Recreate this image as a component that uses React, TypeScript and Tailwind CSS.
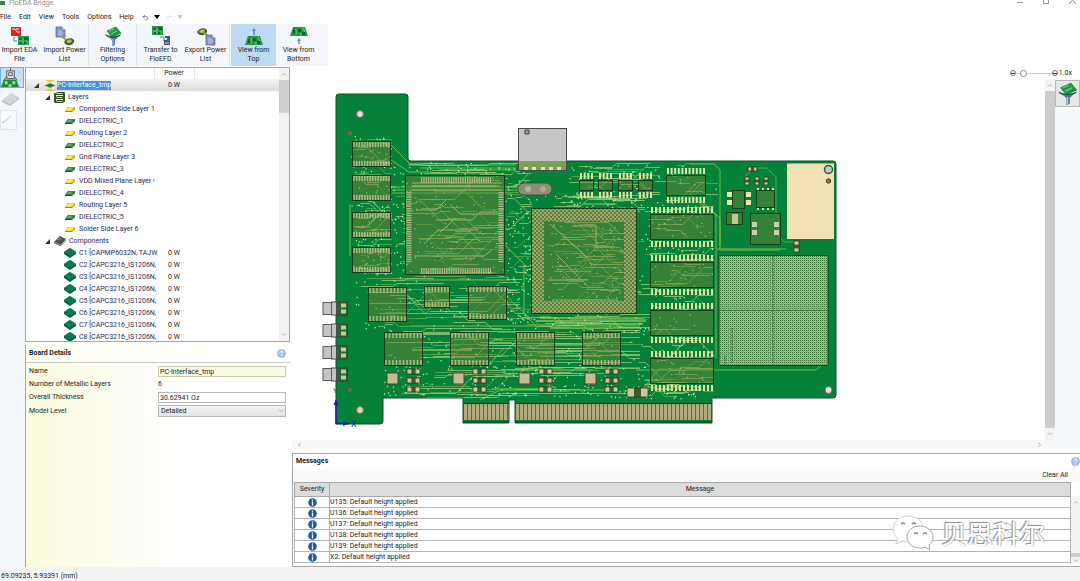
import { useState } from "react"
import type { ReactNode } from "react"
import clsx from "clsx"
import { LuRedo2, LuUndo2 } from "react-icons/lu"

const layers = [
  "Component Side Layer 1",
  "DIELECTRIC_1",
  "Routing Layer 2",
  "DIELECTRIC_2",
  "Gnd Plane Layer 3",
  "DIELECTRIC_3",
  "VDD Mixed Plane Layer ‹",
  "DIELECTRIC_4",
  "Routing Layer 5",
  "DIELECTRIC_5",
  "Solder Side Layer 6",
]

const components = [
  "C1 [CAPMP6032N, TAJW",
  "C2 [CAPC3216_IS1206N,",
  "C3 [CAPC3216_IS1206N,",
  "C4 [CAPC3216_IS1206N,",
  "C5 [CAPC3216_IS1206N,",
  "C6 [CAPC3216_IS1206N,",
  "C7 [CAPC3216_IS1206N,",
  "C8 [CAPC3216_IS1206N,",
]

const messages = ["U135", "U136", "U137", "U138", "U139", "X2"]

/* ---------- icons ---------- */

function MiniBoard({ x, y }: { x: number; y: number }) {
  return (
    <g transform={`translate(${x} ${y})`}>
      <path d="M0 0h11v9H0z" fill="#249a44" />
      <path d="M1 2h3v2H1zM6 1h4v3H6zM2 6h2v2H2zM6 6h3v2H6z" fill="#0c6b2a" />
      <path d="M4 3h2M5 4v4M9 5v3M1 5h3" stroke="#a5e3a4" strokeWidth=".7" />
    </g>
  )
}

function Sheet({ x, y }: { x: number; y: number }) {
  return (
    <g transform={`translate(${x} ${y})`}>
      <path d="M0 0h6l3 3v7H0z" fill="#8397c8" stroke="#4d5f96" strokeWidth=".7" />
      <path d="M6 0v3h3" fill="#dfe6f8" stroke="#4d5f96" strokeWidth=".5" />
      <path d="M2 4h4M2 6h5M2 8h4" stroke="#dbe3f6" strokeWidth=".7" />
    </g>
  )
}

function Coin({ x, y }: { x: number; y: number }) {
  return (
    <g transform={`translate(${x} ${y})`}>
      <path d="M0 4C2 0 8-1 10 2c1 3-3 6-6 5C2 7 1 6 0 4z" fill="#4c5a2a" />
      <path d="M2 4c2-3 5-3 6-1-1 2-3 3-6 1z" fill="#b9c26a" />
    </g>
  )
}

function FunnelIcon({ className }: { className: string }) {
  return (
    <svg viewBox="0 0 20 20" className={className} aria-hidden="true">
      <path d="M4 5l9-4 5 6-9 4z" fill="#1f9a42" stroke="#0c6a2b" strokeWidth=".6" />
      <path d="M6 5l5-2M8 8l6-3" stroke="#7bd485" strokeWidth="1" />
      <path d="M2 8c4 3 12 3 16 0l-6 6v5l-3 1v-6z" fill="#5377a5" />
      <path d="M2 8c4 3 12 3 16 0l-1 2c-4 2-10 2-14 0z" fill="#12583d" />
      <path d="M10 13v6" stroke="#b9cdec" />
    </svg>
  )
}

function ToolIcon({ kind }: { kind: string }) {
  if (kind === "filter") return <FunnelIcon className="size-5" />
  return (
    <svg viewBox="0 0 20 20" className="size-5" aria-hidden="true">
      {kind === "eda" && (
        <>
          <path d="M1 1h10v9H1z" fill="#df2027" />
          <path d="M2 3h3l2 3h3M6 3h3" stroke="#fff" fill="none" />
          <path d="M4 11v4h3" stroke="#777" fill="none" />
          <MiniBoard x={8} y={10} />
        </>
      )}
      {kind === "importPower" && (
        <>
          <Sheet x={1} y={1} />
          <path d="M7 10l4 4" stroke="#8ca52f" strokeWidth="2" />
          <Coin x={9} y={12} />
        </>
      )}
      {kind === "transfer" && (
        <>
          <MiniBoard x={1} y={0} />
          <path d="M9 11h4v4" stroke="#777" fill="none" />
          <path d="M14 10h5v9h-6v-5h3v-2h-2z" fill="#3f5797" />
          <path d="M14 17h4" stroke="#b9c9ee" />
        </>
      )}
      {kind === "exportPower" && (
        <>
          <Coin x={1} y={2} />
          <path d="M7 6l5 4" stroke="#8ca52f" strokeWidth="2" />
          <Sheet x={10} y={9} />
        </>
      )}
      {kind === "top" && (
        <>
          <path d="M4 10h12l3 9H1z" fill="#23943f" />
          <path d="M4 13h3v4H4zM9 12h3v3H9zM13 15h3v3h-3z" fill="#0b642a" />
          <path d="M7 12v6M12 16v3M14 11l2 4" stroke="#a8e5a8" strokeWidth=".7" />
          <path d="M10 9V5" stroke="#5b7fb8" strokeWidth="1.400" />
          <path d="M8 5l2-3 2 3z" fill="#6587bf" />
        </>
      )}
      {kind === "bottom" && (
        <>
          <path d="M4 1h12l3 9H1z" fill="#23943f" />
          <path d="M4 4h3v4H4zM9 3h3v3H9zM13 6h3v3h-3z" fill="#0b642a" />
          <path d="M7 3v6M12 7v3M14 2l2 4" stroke="#a8e5a8" strokeWidth=".7" />
          <path d="M10 18v-4" stroke="#5b7fb8" strokeWidth="1.400" />
          <path d="M8 15l2-3 2 3z" fill="#6587bf" />
        </>
      )}
    </svg>
  )
}

function TreeIcon({ kind }: { kind: string }) {
  if (kind === "board") {
    return (
      <svg viewBox="0 0 14 11" className="h-[11px] w-3.5 shrink-0" aria-hidden="true">
        <path d="M2 0h10L9 2H5zM2 11h10L9 9H5z" fill="#f3c63d" />
        <path d="M0 5.500l4-1 3-2 3 2 4 1-4 1-3 2-3-2z" fill="#d9b325" />
        <path d="M2 5.500l5-2 5 2-5 2z" fill="#12803c" />
      </svg>
    )
  }
  if (kind === "layers") {
    return (
      <svg viewBox="0 0 11 11" className="size-[11px] shrink-0" aria-hidden="true">
        <path d="M3 0h8L9 3H0zM3 4h8L9 7H0zM3 8h8l-2 3H0z" fill="#2c4f1e" />
        <path d="M0 1h2v9H0zM9 1h2v9H9z" fill="#33571f" />
        <path d="M3 1h6L8 2H2zM3 5h6L8 6H2zM3 9h6l-1 1H2z" fill="#ead72e" />
      </svg>
    )
  }
  if (kind === "parts") {
    return (
      <svg viewBox="0 0 12 11" className="h-[11px] w-3 shrink-0" aria-hidden="true">
        <path d="M0 6l6-6 6 3-5 6z" fill="#4a5552" />
        <path d="M0 6l7 3v1L0 7zM8 9l4-5" stroke="#8b9391" strokeWidth="1" />
        <path d="M4 4l3-2" stroke="#9aa5a2" />
      </svg>
    )
  }
  if (kind === "part") {
    return (
      <svg viewBox="0 0 12 10" className="h-2.5 w-3 shrink-0" aria-hidden="true">
        <path d="M0 4l6-4 6 4v2l-6 4-6-4z" fill="#036149" />
        <path d="M0 4l6-4 6 4-6 4z" fill="#0b7a58" />
      </svg>
    )
  }
  const metal = kind === "metal"
  return (
    <svg viewBox="0 0 12 10" className="h-2.5 w-3 shrink-0" aria-hidden="true">
      <path d="M1 7l3-4h7v2L8 8H1z" fill={metal ? "#a68e08" : "#1d4f24"} />
      <path d="M1 7l3-4h7L8 7z" fill={metal ? "#f2dd2b" : "#3b9348"} />
      <path d="M4 6l1-2h3z" fill={metal ? "#fff7a6" : "#8fcb95"} />
    </svg>
  )
}

function HelpBall() {
  return (
    <svg viewBox="0 0 9 9" className="size-[9px]" aria-hidden="true">
      <circle cx="4.500" cy="4.500" r="4" fill="#a9c3ea" stroke="#7f9fd2" strokeWidth=".6" />
      <path d="M3 3.500c0-2 3-2 3 0 0 1-1.500 1-1.500 2M4.500 6.500v1" stroke="#fff" fill="none" />
    </svg>
  )
}

function InfoBall() {
  return (
    <svg viewBox="0 0 9 9" className="mx-auto size-[9px]" role="img" aria-label="Info">
      <circle cx="4.500" cy="4.500" r="4.300" fill="#1d57a8" />
      <path d="M4.500 1.500v1.300M4.500 3.600v4" stroke="#fff" strokeWidth="1.300" />
    </svg>
  )
}

function Arrow({ up = false }: { up?: boolean }) {
  return (
    <svg viewBox="0 0 6 4" className={clsx("h-1 w-1.5", up && "rotate-180")} aria-hidden="true">
      <path d="M1 .5l2 2 2-2" fill="none" stroke="#b0b0b0" />
    </svg>
  )
}

/* ---------- board drawing ---------- */

// small LCG so the routing is the same on every render
function makeRandom(seed: number) {
  let s = seed
  return () => {
    s = (s * 1664525 + 1013904223) % 4294967296
    return s / 4294967296
  }
}

type Area = [x1: number, y1: number, x2: number, y2: number, traces: number, vias: number]

const routed: Area[] = [
  [352, 136, 392, 275, 36, 150],
  [406, 176, 504, 274, 34, 70],
  [392, 164, 408, 272, 12, 40],
  [408, 163, 520, 175, 12, 30],
  [505, 172, 532, 320, 34, 90],
  [568, 164, 660, 205, 16, 45],
  [534, 195, 645, 210, 12, 30],
  [544, 220, 626, 302, 42, 90],
  [638, 204, 714, 390, 46, 170],
  [655, 164, 718, 205, 6, 12],
  [355, 276, 520, 332, 26, 55],
  [384, 330, 640, 368, 34, 80],
  [384, 366, 640, 398, 22, 150],
  [500, 314, 650, 332, 14, 30],
  [640, 384, 700, 400, 10, 30],
]

function buildRouting() {
  const rnd = makeRandom(77)
  const light: string[] = []
  const dark: string[] = []
  const vias: string[] = []
  routed.forEach(([x1, y1, x2, y2, traces, dots]) => {
    const w = x2 - x1
    for (let i = 0; i < traces; i++) {
      const x = x1 + rnd() * w * 0.7
      const y = Math.round(y1 + rnd() * (y2 - y1)) + 0.5
      const run = 3 + rnd() * w * 0.3
      let jog = Math.round((rnd() - 0.5) * 44)
      if (y + jog < y1 || y + jog > y2) jog = Math.round(jog / 6)
      if (x + run + Math.abs(jog) > x2) jog = 0
      const end = Math.min(x + run + Math.abs(jog) + rnd() * w * 0.4, x2)
      const d = `M${x.toFixed(1)} ${y}h${run.toFixed(1)}l${Math.abs(jog)} ${jog}H${end.toFixed(1)}`
      ;(rnd() > 0.45 ? light : dark).push(d)
    }
    for (let i = 0; i < dots; i++) {
      const x = (x1 + rnd() * w).toFixed(1)
      const y = (y1 + rnd() * (y2 - y1)).toFixed(1)
      vias.push(`M${x} ${y}h.01`)
    }
  })
  return { light: light.join(""), dark: dark.join(""), vias: vias.join("") }
}

const routing = buildRouting()

const outline =
  "M339 94H405q3 0 3 3V158q0 3 3 3H833q3 0 3 3V395q0 3-3 3H712V423H515V400H509V423H463V398H383V421q0 3-3 3H336V97q0-3 3-3z"

type Box = { x: number; y: number; w: number; h: number }

function Pins({ x, y, n, step, h = 6, w = 2, color = "#dfe3a0" }: { x: number; y: number; n: number; step: number; h?: number; w?: number; color?: string }) {
  const d = Array.from({ length: n }, (_, i) => `M${(x + i * step).toFixed(1)} ${y}v${h}`).join("")
  return <path d={d} stroke={color} strokeWidth={w} />
}

function Body({ x, y, w, h }: Box) {
  return <rect x={x + 0.5} y={y + 0.5} width={w - 1} height={h - 1} fill="#6f8035" fillOpacity=".45" stroke="#133d1b" />
}

// package whose pads sit under its outline
function InnerChip({ x, y, w, h, n }: Box & { n: number }) {
  const step = (w - 4) / (n - 1)
  return (
    <g>
      <Body x={x} y={y} w={w} h={h} />
      <Pins x={x + 2} y={y + 1} n={n} step={step} h={5} w={1.5} color="#b5b882" />
      <Pins x={x + 2} y={y + h - 6} n={n} step={step} h={5} w={1.5} color="#b5b882" />
    </g>
  )
}

// package with pads above and below its outline
function OuterChip({ x, y, w, h, n }: Box & { n: number }) {
  const step = (w - 4) / (n - 1)
  return (
    <g>
      <Pins x={x + 2} y={y - 7} n={n} step={step} />
      <Pins x={x + 2} y={y + h + 1} n={n} step={step} />
      <Body x={x} y={y} w={w} h={h} />
    </g>
  )
}

function Passive({ x, y, w, h }: Box) {
  const wide = w > h
  return (
    <g>
      <rect x={x} y={y} width={w} height={h} fill="#cfc79a" />
      {wide ? (
        <rect x={x + w / 3} y={y} width={w / 3} height={h} fill="#34602e" />
      ) : (
        <rect x={x} y={y + h / 3} width={w} height={h / 3} fill="#34602e" />
      )}
      <rect x={x} y={y} width={w} height={h} fill="none" stroke="#3a2f22" strokeWidth=".8" />
    </g>
  )
}

function Board() {
  return (
    <svg viewBox="320 90 520 342" className="block h-[342px] w-[520px] shrink-0" role="img" aria-label="Board view">
      <defs>
        <clipPath id="outline">
          <path d={outline} />
        </clipPath>
        <pattern id="balls" width="4" height="4" patternUnits="userSpaceOnUse">
          <rect width="4" height="4" fill="#3f7a35" />
          <circle cx="1" cy="1" r="1.200" fill="#cdd0a4" />
          <circle cx="3" cy="3" r="1.200" fill="#cdd0a4" />
        </pattern>
        <pattern id="proto" width="4" height="4" patternUnits="userSpaceOnUse">
          <rect width="4" height="4" fill="#a9b985" />
          <path d="M0 0h1v1H0zM2 2h1v1H2zM0 2h1v1H0zM2 0h1v1H2z" fill="#3f7a3c" />
          <path d="M1 1h1v1H1zM3 3h1v1H3z" fill="#7fa35d" />
        </pattern>
        <pattern id="fingers" x="3" width="4" height="20" patternUnits="userSpaceOnUse">
          <rect width="4" height="20" fill="#b3ab80" />
          <rect width="1" height="20" fill="#5b6a3e" />
        </pattern>
      </defs>

      <g clipPath="url(#outline)">
        <rect x="330" y="90" width="510" height="340" fill="#05813a" />
        <path
          d="M408 165h108M420 168h96M439 170h77M392 187h130M392 190h130M392 193h120M350 204v52M391 145l18 18M391 160l18 12h22M400 280h110M410 326h230M690 164h24l6 6v76M690 195l26 20v34h70M700 200l20 18v32h60M623 391h18l18-22h54M636 370h180l6-5M500 240l24 24v50l14 14M506 296l26 24M480 400l20-10h110M716 250v108M486 368l18-20M512 352l18 22"
          fill="none"
          stroke="#6cbd50"
        />
        <path
          d="M540 318h104M536 321h110M545 324h98M550 328h90M412 183h90M412 186h88M412 350h60M540 345h60M540 356h60"
          fill="none"
          stroke="#8fc255"
          strokeWidth="1.500"
        />
        <path d={routing.dark} fill="none" stroke="#4aa64a" />
        <path d={routing.light} fill="none" stroke="#96c774" strokeWidth=".8" />
        <path d={routing.vias} stroke="#b9efa8" strokeWidth="1.500" strokeLinecap="round" />

        <rect x="463" y="403" width="46" height="17" fill="url(#fingers)" />
        <rect x="515" y="403" width="197" height="17" fill="url(#fingers)" />
        <path d="M463 403.500h46M515 403.500h197M463 422h46M515 422h197" stroke="#12401f" />
      </g>
      <path d={outline} fill="none" stroke="#0c5126" />

      {[141, 175, 212, 247].map((y) => (
        <InnerChip key={y} x={352} y={y} w={39} h={26} n={14} />
      ))}

      {/* quad flat pack */}
      <Body x={405} y={175} w={100} h={100} />
      <path d="M421 180h70M421 271h70" stroke="#b3b884" strokeWidth="6" strokeDasharray="1.300 1" />
      <path d="M409 192v70M501 192v70" stroke="#b3b884" strokeWidth="5" strokeDasharray="1.300 1" />
      <path
        d="M412 186h84M412 190h90M436 220h36l8-8h18M440 232l16-14M424 244l14-14h40M414 256h70l8-6M450 204l10 10h40M416 210h20l10-10"
        fill="none"
        stroke="#9fb26c"
      />

      {/* ball grid array */}
      <path d="M531 208h106v106H531zM544 221v80h80v-80z" fill="url(#balls)" fillRule="evenodd" />
      <Body x={531} y={208} w={106} h={106} />
      <path d="M550 224l38 34M556 254l20 20M572 226h24v20M548 280h40M600 290h20M552 300h66" stroke="#9fb26c" fill="none" />

      <rect x="518.500" y="129" width="48" height="42" fill="#c6c6c6" />
      <rect x="518.500" y="161" width="48" height="10" fill="#7da056" />
      <path d="M524 169h4M532 169h4M541 169h4M549 169h4M557 169h4" stroke="#e0e0cc" strokeWidth="4" />
      <rect x="518.500" y="128.500" width="48" height="42" fill="none" stroke="#4a4a4a" />
      <path d="M525 130h4v4h-4z" fill="#999" stroke="#444" />
      <rect x="518" y="183" width="34" height="12" rx="6" fill="#8b8f78" stroke="#44503a" />
      <circle cx="528" cy="189" r="3" fill="#a9b7a4" />
      <circle cx="543" cy="189" r="3" fill="#b5a78e" />

      {[579, 598, 618, 638].map((x) => (
        <OuterChip key={x} x={x} y={180} w={15} h={11} n={4} />
      ))}
      <OuterChip x={666} y={175} w={40} h={21} n={11} />
      {[214, 262, 310, 358].map((y) => (
        <OuterChip key={y} x={650} y={y} w={64} h={26} n={16} />
      ))}

      <InnerChip x={368} y={287} w={39} h={35} n={11} />
      <InnerChip x={424} y={286} w={26} h={22} n={8} />
      <InnerChip x={468} y={286} w={39} h={34} n={11} />
      {[384, 450, 516, 582].map((x) => (
        <g key={x}>
          <InnerChip x={x} y={332} w={39} h={34} n={11} />
          <rect x={x + 3} y={373} width="11" height="11" fill="#c8bc92" stroke="#4a4a2c" />
          <Passive x={x + 23} y={369} w={13} h={5} />
          <Passive x={x + 23} y={378} w={13} h={5} />
          <Passive x={x + 23} y={387} w={13} h={5} />
        </g>
      ))}
      <Passive x={627} y={388} w={21} h={9} />

      {/* supply corner */}
      <rect x="787" y="163.500" width="47" height="75.500" fill="#f4e1b4" />
      <path d="M745 177l8-9h14l9 9v38M774 230l10 12h12" stroke="#68b861" fill="none" strokeWidth=".8" />
      <Passive x={748} y={167} w={9} h={4} />
      <Passive x={745} y={177} w={4} h={8} />
      <Passive x={755} y={177} w={4} h={8} />
      <Passive x={764} y={177} w={4} h={8} />
      <path d="M727 192h5v5h-5zM727 200h5v5h-5zM746 192h5v5h-5zM746 200h5v5h-5z" fill="#eee6a8" />
      <Body x={732} y={190} w={13} h={19} />
      <Pins x={758} y={188} n={4} step={5} h={3} />
      <Pins x={758} y={207} n={4} step={5} h={3} />
      <Body x={756} y={190} w={19} h={18} />
      <Body x={726} y={212} w={17} h={13} />
      <path d="M732 214h6v10h-6z" fill="#c1c79b" />
      <Body x={750} y={213} w={31} h={32} />
      <path d="M752 222h5v5h-5zM752 230h5v5h-5zM774 222h5v5h-5zM774 230h5v5h-5z" fill="#c7d0ae" />
      <Passive x={794} y={241} w={5} h={11} />

      {/* prototyping field */}
      <rect x="719" y="255.500" width="109" height="110" rx="1" fill="url(#proto)" stroke="#19401f" />
      <path d="M773 256v109M719.500 310.500h108" stroke="#2f6d34" strokeDasharray="2 1" />
      <path d="M732 328v36M725 356v8" stroke="#2f6d34" strokeDasharray="2 1" />

      {/* front panel leds */}
      {[302, 324, 346, 368].map((y) => (
        <g key={y}>
          <rect x="336.500" y={y} width="11" height="13" fill="#2c6331" stroke="#3f3f34" />
          <path d={`M341 ${y + 1.5}h5v4h-5zM341 ${y + 7.5}h5v4h-5z`} fill="#b8d19b" />
          <rect x="331.500" y={y} width="5" height="13" fill="#c5c5c5" stroke="#4b4b4b" />
          <rect x="323" y={y + 0.5} width="8.500" height="12" fill="#c5c5c5" stroke="#5b5b5b" />
        </g>
      ))}

      <g stroke="#6c6a58">
        <circle cx="360" cy="114" r="3.500" fill="#ead9d4" />
        <circle cx="360" cy="410" r="3.500" fill="#ded6c4" />
        <circle cx="828.500" cy="390" r="3.500" fill="#ead9d4" />
        <circle cx="350" cy="133.500" r="1.500" fill="#8b5a3c" />
        <circle cx="350" cy="390" r="1.500" fill="#8b5a3c" />
        <circle cx="828.500" cy="181" r="2.200" fill="#8a7a28" stroke="#4b4216" />
        <circle cx="828.500" cy="169.500" r="4" fill="#b9d3c2" stroke="#205e3c" strokeWidth="1.500" />
      </g>

      <path d="M336 401v22.500h13" stroke="#15259b" strokeWidth="1.500" fill="none" />
      <path d="M333.500 405l2.500-6 2.500 6zM343 421l6 2.500-6 2.500z" fill="#15259b" />
      <text x="333" y="393" className="text-[7px]" fill="#1a4f3a">Y</text>
      <text x="351" y="427" className="text-[9px]" fill="#15259b">X</text>
    </svg>
  )
}

/* ---------- shell ---------- */

function ToolButton({ icon, label, active = false }: { icon: string; label: ReactNode; active?: boolean }) {
  return (
    <button
      type="button"
      className={clsx("flex w-[45px] shrink-0 flex-col items-center pt-0.5 whitespace-nowrap", active && "bg-[#bddaf3]")}
    >
      <ToolIcon kind={icon} />
      <span className="leading-[9px]">{label}</span>
    </button>
  )
}

function Divider() {
  return <span className="mx-px w-px shrink-0 bg-[#dde3ea]" />
}

function TopBar() {
  return (
    <header className="shrink-0">
      <div className="flex h-[10px] items-start justify-between text-[#8d8d8d]">
        <div className="flex h-[7px] items-center gap-1">
          <svg viewBox="0 0 5 5" className="size-[5px]" aria-hidden="true">
            <path d="M0 0h5v4H0z" fill="#2a8a4b" />
          </svg>
          <span className="leading-[7px]">FloEDA Bridge</span>
        </div>
        <div className="flex h-1 gap-5 pr-1">
          <button type="button" aria-label="Minimize" className="h-[3px] w-[6px] border-b border-[#9a9a9a]" />
          <button type="button" aria-label="Restore" className="h-1 w-[6px] border-x border-b border-[#9a9a9a]" />
          <button type="button" aria-label="Close" className="h-1 w-[7px]">
            <svg viewBox="0 0 7 4" className="h-1 w-[7px]" aria-hidden="true">
              <path d="M0 4l3.500-4L7 4" fill="none" stroke="#8a8a8a" />
            </svg>
          </button>
        </div>
      </div>
      <nav className="flex h-[14px] items-center gap-2">
        <button type="button">File</button>
        <button type="button">Edit</button>
        <button type="button">View</button>
        <button type="button">Tools</button>
        <button type="button">Options</button>
        <button type="button">Help</button>
        <span className="flex items-center gap-[5px]">
          <button type="button" aria-label="Undo"><LuUndo2 className="size-[7px] text-[#243f66]" /></button>
          <button type="button" aria-label="Undo history" className="border-x-3 border-t-4 border-x-transparent border-t-black" />
          <button type="button" aria-label="Redo"><LuRedo2 className="size-[7px] text-[#cfcfcf]" /></button>
          <button type="button" aria-label="Redo history" className="border-x-3 border-t-4 border-x-transparent border-t-[#c9c9c9]" />
        </span>
      </nav>
      <div className="flex">
        <div className="flex h-[42px] bg-[#f3f7fc] pr-[7px]">
          <div className="-ml-[3px] flex">
            <ToolButton icon="eda" label={<>Import EDA<br />File</>} />
            <ToolButton icon="importPower" label={<>Import Power<br />List</>} />
            <Divider />
            <ToolButton icon="filter" label={<>Filtering<br />Options</>} />
            <Divider />
            <ToolButton icon="transfer" label={<>Transfer to<br />FloEFD</>} />
            <ToolButton icon="exportPower" label={<>Export Power<br />List</>} />
            <Divider />
            <ToolButton icon="top" label={<>View from<br />Top</>} active />
            <ToolButton icon="bottom" label={<>View from<br />Bottom</>} />
          </div>
        </div>
      </div>
    </header>
  )
}

function SideRail() {
  return (
    <aside className="flex w-[25px] shrink-0 flex-col bg-[#f3f7fc]">
      <button type="button" aria-label="Board view" className="flex h-[21px] w-6 items-center border border-[#6eaee0] bg-[#c4e0f6]">
        <svg viewBox="0 0 20 20" className="size-[19px]" aria-hidden="true">
          <path d="M3 12h13l3 8H0z" fill="#1e8a3c" />
          <path d="M4 14h3v3H4zM12 14h3v3h-3zM8 17h3v3H8z" fill="#a9d7a5" />
          <path d="M6 3h8v8H6z" fill="#e6e9ed" stroke="#555" />
          <path d="M10 0v3M3 13l3-4M17 13l-3-4M8 5h4v3H8z" stroke="#555" fill="none" />
        </svg>
      </button>
      <button type="button" aria-label="Component view" className="flex h-[22px] items-center">
        <svg viewBox="0 0 20 16" className="h-4 w-5" aria-hidden="true">
          <path d="M2 9l9-7 8 4-9 7z" fill="#d3d5d7" />
          <path d="M2 9l8 4v2l-8-4zM10 13l9-7v2l-9 7z" fill="#bbbec1" />
        </svg>
      </button>
      <button type="button" aria-label="Edit" className="h-5 w-[17px] border border-[#e1e4e8] bg-[#f8f9fb]">
        <svg viewBox="0 0 16 16" className="size-4" aria-hidden="true">
          <path d="M2 11l8-7M2 11v-2" stroke="#c4c4c4" fill="none" />
        </svg>
      </button>
    </aside>
  )
}

function TreeRow({ depth, icon, label, power, open }: { depth: number; icon: string; label: string; power?: string; open?: boolean }) {
  const root = depth === 0
  return (
    <tr className={clsx("h-3", root && "bg-linear-to-b from-[#f4f4f4] to-[#dcdcdc]")}>
      <td className="p-0">
        <div className={clsx("flex h-3 items-center", root && "pl-2", depth === 1 && "pl-[19px]", depth === 2 && "pl-[38px]")}>
          {open && (
            <svg viewBox="0 0 5 5" className="mr-1 size-[5px] shrink-0" aria-hidden="true">
              <path d="M5 0v5H0z" fill="#333" />
            </svg>
          )}
          <TreeIcon kind={icon} />
          <span className={clsx("whitespace-nowrap", root ? "bg-[#4a90d9] text-white" : "ml-[3px] text-[#2a2a52]")}>
            {label}
          </span>
        </div>
      </td>
      <td className="p-0 text-center">{power}</td>
      <td className="p-0" />
    </tr>
  )
}

function BoardTree() {
  return (
    <section className="flex h-[275px] shrink-0 border border-[#a3a7ad] bg-white">
      <div className="min-w-0 flex-1 overflow-hidden">
        <table className="w-full table-fixed border-collapse">
          <colgroup>
            <col className="w-[128px]" />
            <col className="w-10" />
            <col />
          </colgroup>
          <thead>
            <tr className="h-[11px]">
              <th className="border-r border-[#e3e3e3] p-0" aria-label="Item" />
              <th className="border-r border-[#e3e3e3] p-0 font-normal">Power</th>
              <th className="p-0" />
            </tr>
          </thead>
          <tbody>
            <TreeRow depth={0} icon="board" label="PC-Interface_tmp" power="0 W" open />
            <TreeRow depth={1} icon="layers" label="Layers" open />
            {layers.map((name, i) => (
              <TreeRow key={name} depth={2} icon={i % 2 ? "dielectric" : "metal"} label={name} />
            ))}
            <TreeRow depth={1} icon="parts" label="Components" open />
            {components.map((name) => (
              <TreeRow key={name} depth={2} icon="part" label={name} power="0 W" />
            ))}
          </tbody>
        </table>
      </div>
      <div className="flex w-[10px] shrink-0 flex-col items-center justify-between bg-[#f2f2f2] py-1">
        <div className="flex w-full flex-col items-center gap-1">
          <Arrow up />
          <div className="h-[33px] w-full bg-[#cdcdcd]" />
        </div>
        <Arrow />
      </div>
    </section>
  )
}

function BoardDetails() {
  const [name, setName] = useState("PC-Interface_tmp")
  const [thickness, setThickness] = useState("30.62941 Oz")
  return (
    <section className="mt-[3px] flex-1 border-l border-[#a3a7ad] bg-linear-to-r from-[#fcfbdd] to-white to-60%">
      <div className="flex h-[18px] items-center justify-between border-b border-[#c9c9c9] bg-linear-to-r from-[#fffff0] to-white pr-1 pl-[3px]">
        <h2 className="font-bold">Board Details</h2>
        <button type="button" aria-label="Help on board details"><HelpBall /></button>
      </div>
      <div className="grid grid-cols-[129px_1fr] items-center gap-y-[2px] pt-[3px] pr-1 pl-[3px]">
        <label htmlFor="name">Name</label>
        <input
          id="name"
          value={name}
          onChange={(e) => setName(e.target.value)}
          className="h-[11px] w-full min-w-0 border border-[#c9c9b0] bg-[#fafbe3] px-px"
        />
        <span>Number of Metallic Layers</span>
        <span className="h-[11px] leading-[11px]">6</span>
        <label htmlFor="thickness">Overall Thickness</label>
        <input
          id="thickness"
          value={thickness}
          onChange={(e) => setThickness(e.target.value)}
          className="h-[11px] w-full min-w-0 border border-[#b8b8b8] bg-white px-px"
        />
        <label htmlFor="level">Model Level</label>
        <div className="relative flex items-center">
          <select id="level" defaultValue="Detailed" className="h-3 w-full appearance-none border border-[#b8b8b8] bg-linear-to-b from-[#f2f2f2] to-[#e4e4e4] px-0.5">
            <option>Detailed</option>
            <option>Compact</option>
          </select>
          <span className="pointer-events-none absolute right-0.5"><Arrow /></span>
        </div>
      </div>
    </section>
  )
}

function Viewport() {
  const [zoom, setZoom] = useState(15)
  return (
    <main className="flex min-h-0 flex-1 flex-col bg-white">
      <div className="flex h-3 shrink-0 items-center justify-end pr-2">
        <button type="button" aria-label="Zoom out" className="flex size-1.5 items-center rounded-full border border-[#777]">
          <span className="h-px w-full bg-[#555]" />
        </button>
        <input
          type="range"
          aria-label="Zoom"
          value={zoom}
          onChange={(e) => setZoom(Number(e.target.value))}
          className="h-2 w-9 appearance-none bg-linear-to-b from-transparent from-[45%] via-[#777] via-[50%] to-transparent to-[60%] [&::-webkit-slider-thumb]:size-[7px] [&::-webkit-slider-thumb]:appearance-none [&::-webkit-slider-thumb]:rounded-full [&::-webkit-slider-thumb]:border [&::-webkit-slider-thumb]:border-[#888] [&::-webkit-slider-thumb]:bg-white"
        />
        <button type="button" aria-label="Zoom in" className="flex size-1.5 items-center justify-center rounded-full border border-[#777]">
          <span className="h-px w-full bg-[#333]" />
        </button>
        <span className="ml-px">1.0x</span>
      </div>
      <div className="flex min-h-0 flex-1">
        <div className="flex min-w-0 flex-1 flex-col">
          <div className="flex min-h-0 flex-1">
            <div className="min-w-0 flex-1 overflow-hidden pt-[11px] pl-7">
              <Board />
            </div>
            <div className="flex w-[10px] shrink-0 flex-col items-center gap-1 bg-[#f4f4f4] py-1">
              <Arrow up />
              <div className="w-full flex-1 bg-[#cdcdcd]" />
              <Arrow />
            </div>
          </div>
          <div className="flex h-[9px] shrink-0 items-center justify-between bg-[#f8f8f8] pr-3 pl-1">
            <span className="rotate-90"><Arrow /></span>
            <span className="-rotate-90"><Arrow /></span>
          </div>
        </div>
        <div className="w-[25px] shrink-0 bg-[#f5f8fc]">
          <button type="button" aria-label="Filter view" className="mt-px flex h-[27px] w-full items-center justify-center border border-[#b9b9b9] bg-[#e7e7e7]">
            <FunnelIcon className="size-[23px]" />
          </button>
        </div>
      </div>
    </main>
  )
}

function Messages() {
  return (
    <section className="relative h-[114px] shrink-0 border-y border-l border-[#a3a7ad] bg-white">
      <div className="flex h-[15px] items-center justify-between pl-[3px]">
        <h2 className="font-bold">Messages</h2>
        <button type="button" aria-label="Help on messages"><HelpBall /></button>
      </div>
      <div className="flex h-[13px] items-center justify-end bg-[#fafafa] pr-3">
        <button type="button">Clear All</button>
      </div>
      <div className="flex pl-px">
        <table className="min-w-0 flex-1 table-fixed border-collapse">
          <thead>
            <tr className="h-[14px] bg-[#dcdcdc]">
              <th className="w-[35px] border border-[#a9a9a9] p-0 font-normal">Severity</th>
              <th className="border border-[#a9a9a9] p-0 font-normal">Message</th>
            </tr>
          </thead>
          <tbody>
            {messages.map((part) => (
              <tr key={part} className="h-[11px]">
                <td className="border border-[#b3b3b3] p-0"><InfoBall /></td>
                <td className="border border-[#b3b3b3] p-0">{part}: Default height applied</td>
              </tr>
            ))}
          </tbody>
        </table>
        <div className="mt-[14px] flex w-[9px] shrink-0 flex-col items-center justify-between bg-[#f4f4f4] pt-1">
          <Arrow up />
          <div className="flex w-full flex-col items-center gap-0.5">
            <div className="h-1 w-full bg-[#cdcdcd]" />
            <Arrow />
          </div>
        </div>
      </div>
      <div className="pointer-events-none absolute right-[35px] bottom-[14px] flex items-center gap-1.5">
        <svg viewBox="0 0 44 38" className="h-[38px] w-11" aria-hidden="true">
          <path d="M17 2C8 2 2 8 2 15c0 4 2 7 5 10l-2 5 6-3c12 3 21-4 21-12S26 2 17 2z" fill="#fff" stroke="#d0d0d0" />
          <path d="M29 12c-8 0-13 5-13 11s5 11 13 11c2 0 4 0 5-1l5 3-1-5c3-2 4-5 4-8 0-6-6-11-13-11z" fill="#fff" stroke="#a5a5a5" />
          <path d="M10 10q2-2 4 0M21 10q2-2 4 0M23 20q2-2 4 0M32 20q2-2 4 0" fill="none" stroke="#888" strokeWidth="1.500" />
        </svg>
        <span className="font-['Noto_Sans_CJK_SC',sans-serif] text-[26px] leading-[36px] text-white [text-shadow:-1px_-1px_1px_#888,1px_0_1px_#aaa]">
          贝思科尔
        </span>
      </div>
    </section>
  )
}

export default function App() {
  return (
    <div className="flex h-screen flex-col overflow-hidden bg-white font-[Roboto,'Open_Sans',sans-serif] text-[7px] leading-[9px] text-[#222]">
      <TopBar />
      <div className="flex min-h-0 flex-1 pt-px">
        <SideRail />
        <div className="flex w-[265px] shrink-0 flex-col">
          <BoardTree />
          <BoardDetails />
        </div>
        <div className="ml-0.5 flex min-w-0 flex-1 flex-col gap-1">
          <Viewport />
          <Messages />
        </div>
      </div>
      <footer className="flex h-[14px] shrink-0 items-center bg-[#f4f4f4] pt-1 pl-px">69.09235, 5.93391 (mm)</footer>
    </div>
  )
}
